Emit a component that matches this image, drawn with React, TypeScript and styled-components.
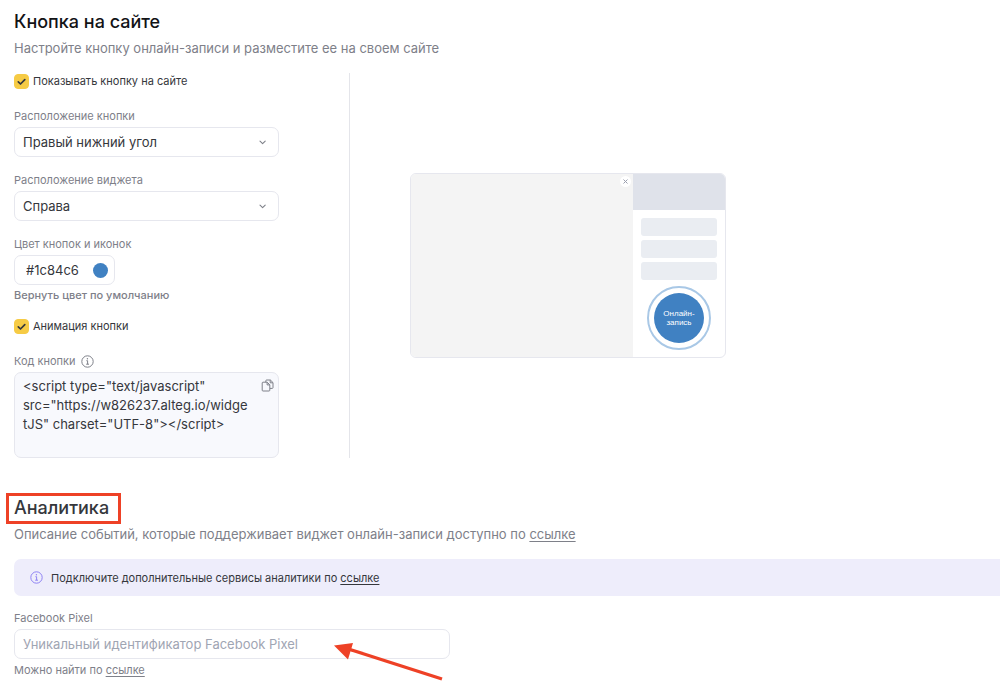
import React from 'react';
import styled, { createGlobalStyle } from 'styled-components';

const GlobalStyle = createGlobalStyle`
  *, *::before, *::after { box-sizing: border-box; }
  body {
    margin: 0;
    background: #fff;
    color: #35373c;
    font-family: Inter, "Liberation Sans", sans-serif;
    font-size: 11px;
    line-height: 16px;
  }
`;

const Page = styled.main`
  padding: 10px 0 16px 14px;
`;

const Title = styled.h2<{ $tone?: string }>`
  margin: 0;
  font-size: 18px;
  line-height: 24px;
  font-weight: 500;
  color: ${(p) => p.$tone ?? '#121316'};
`;

const Lead = styled.p`
  margin: 4px 0 15px;
  font-size: 13px;
  line-height: 20px;
  color: #7e8089;
`;

const Columns = styled.div`
  display: flex;
  margin-bottom: 38px;
`;

const Settings = styled.div`
  flex: 0 0 336px;
  padding-right: 70px;
  border-right: 1px solid #e4e5ea;
`;

const Field = styled.div`
  display: flex;
  flex-direction: column;
  align-items: flex-start;
  gap: 3px;
  margin-bottom: 15px;
  &:last-child { margin-bottom: 0; }
`;

const Label = styled.label`
  display: flex;
  align-items: center;
  gap: 5px;
  color: #7e8089;
`;

const CheckRow = styled.label`
  display: flex;
  align-items: center;
  gap: 4px;
  margin-bottom: 19px;
`;

const CheckWrap = styled.span`
  display: grid;
  width: 15px;
  height: 15px;
  > * { grid-area: 1 / 1; }
  svg { pointer-events: none; }
`;

const CheckBox = styled.input`
  appearance: none;
  width: 15px;
  height: 15px;
  margin: 0;
  border: 1px solid #c9ccd6;
  border-radius: 4px;
  &:checked { border-color: #f6cb45; background: #f6cb45; }
`;

const SelectWrap = styled.div`
  display: grid;
  align-items: center;
  width: 100%;
  > * { grid-area: 1 / 1; }
  svg { justify-self: end; margin-right: 12px; pointer-events: none; }
`;

const Select = styled.select`
  appearance: none;
  width: 100%;
  height: 30px;
  padding: 0 28px 0 8px;
  border: 1px solid #e6e7ee;
  border-radius: 7px;
  background: #fff;
  color: #35373c;
  font: inherit;
  font-size: 13px;
`;

const ColorBox = styled.div`
  display: flex;
  align-items: center;
  gap: 8px;
  width: 101px;
  height: 30px;
  padding: 0 6px 0 11px;
  border: 1px solid #e6e7ee;
  border-radius: 7px;
`;

const ColorInput = styled.input`
  flex: 1;
  min-width: 0;
  padding: 0;
  border: 0;
  outline: 0;
  background: none;
  color: #35373c;
  font: inherit;
  font-size: 13px;
`;

const Swatch = styled.span`
  width: 15px;
  height: 15px;
  border-radius: 50%;
  background: #4081c2;
`;

const ResetButton = styled.button`
  margin-top: -1px;
  padding: 0;
  border: 0;
  background: none;
  color: #7e8089;
  font: inherit;
  font-weight: 500;
  cursor: pointer;
`;

const CodeWrap = styled.div`
  display: grid;
  width: 100%;
  > * { grid-area: 1 / 1; }
`;

const Code = styled.textarea`
  width: 100%;
  height: 86px;
  padding: 4px 30px 4px 8px;
  border: 1px solid #e6e7ee;
  border-radius: 7px;
  background: #f8f9fd;
  color: #35373c;
  font: inherit;
  font-size: 13px;
  line-height: 19px;
  resize: none;
  overflow: hidden;
`;

const CopyButton = styled.button`
  display: flex;
  align-self: start;
  justify-self: end;
  margin: 7px 5px 0 0;
  padding: 0;
  border: 0;
  background: none;
  cursor: pointer;
`;

const PreviewPane = styled.div`
  display: flex;
  flex: 1;
  align-items: center;
  padding-left: 60px;
`;

const Preview = styled.div`
  display: flex;
  width: 316px;
  height: 185px;
  border: 1px solid #e6e7ee;
  border-radius: 6px;
  overflow: hidden;
`;

const PreviewSite = styled.div`
  display: flex;
  flex: 1;
  align-items: flex-start;
  justify-content: flex-end;
  padding: 2px;
  background: #f4f4f4;
`;

const PreviewClose = styled.span`
  display: flex;
  align-items: center;
  justify-content: center;
  width: 11px;
  height: 11px;
  border-radius: 50%;
  background: #fff;
`;

const PreviewWidget = styled.div`
  display: flex;
  flex-direction: column;
  align-items: center;
  gap: 4px;
  width: 92px;
`;

const PreviewHeader = styled.div`
  width: 100%;
  height: 36px;
  margin-bottom: 4px;
  background: #dfe2ea;
`;

const PreviewLine = styled.div`
  width: 76px;
  height: 18px;
  border-radius: 3px;
  background: #eaedf2;
`;

const PulseRing = styled.div`
  display: flex;
  align-items: center;
  justify-content: center;
  width: 64px;
  height: 64px;
  margin-top: 2px;
  border: 2px solid #a9c8e6;
  border-radius: 50%;
`;

const RecordButton = styled.button`
  width: 50px;
  height: 50px;
  padding: 0;
  border: 0;
  border-radius: 50%;
  background: #4081c2;
  color: #fff;
  font-family: "Liberation Sans", Arial, sans-serif;
  font-size: 8px;
  line-height: 9px;
`;

const Marked = styled.div`
  position: relative;
  width: fit-content;
  &::after {
    content: '';
    position: absolute;
    inset: -3px -12px -4px -8px;
    border: 3px solid #ee4126;
  }
`;

const Link = styled.a`
  color: inherit;
  text-decoration: underline;
  text-underline-offset: 2px;
`;

const Notice = styled.div`
  display: flex;
  align-items: center;
  gap: 8px;
  height: 37px;
  margin-bottom: 14px;
  padding-left: 16px;
  border-radius: 7px 0 0 7px;
  background: #eeedfb;
`;

const PixelWrap = styled.div`
  position: relative;
  width: 100%;
  max-width: 436px;
`;

const PixelInput = styled.input`
  width: 100%;
  height: 30px;
  padding: 0 8px;
  border: 1px solid #e6e7ee;
  border-radius: 7px;
  background: #fff;
  font: inherit;
  font-size: 13px;
  &::placeholder { color: #9fa5b3; opacity: 1; }
`;

const Arrow = styled.svg`
  position: absolute;
  top: 11px;
  right: 6px;
  pointer-events: none;
`;

const Hint = styled.span`
  color: #7e8089;
`;

const Check = () => (
  <svg width="15" height="15" viewBox="0 0 15 15" fill="none" stroke="#35373c" strokeWidth="1.7" strokeLinecap="round" strokeLinejoin="round">
    <path d="M4.3 7.9l2.2 2.1 4.3-4.3" />
  </svg>
);

const Chevron = () => (
  <svg width="9" height="9" viewBox="0 0 9 9" fill="none" stroke="#7e8089" strokeWidth="1.1" strokeLinecap="round" strokeLinejoin="round">
    <path d="M2 3.2l2.6 2.5 2.6-2.5" />
  </svg>
);

const Info = ({ color }: { color: string }) => (
  <svg width="13" height="13" viewBox="0 0 13 13" fill="none" stroke={color} strokeWidth="1">
    <circle cx="6.5" cy="6.5" r="5.7" />
    <path d="M5.4 5.7h1.2v3.4M5.2 9.2h2.8" />
    <circle cx="6.4" cy="3.8" r=".7" fill={color} stroke="none" />
  </svg>
);

const Copy = () => (
  <svg width="13" height="13" viewBox="0 0 13 13" fill="none" stroke="#7e8089" strokeWidth="1" strokeLinejoin="round">
    <path d="M5.6 1h3.8l2.600 2.600v5a.8.8 0 0 1-.8.8H9" />
    <path d="M5.6 1a.8.8 0 0 0-.8.8v1.400" />
    <path d="M9.2 1.100v2.700h2.700" />
    <path d="M2 3.200h4.200l2.600 2.600v5.400a.8.8 0 0 1-.8.800H2a.8.8 0 0 1-.8-.8V4a.8.8 0 0 1 .8-.8z" />
    <path d="M6.100 3.300v2.600h2.600" />
  </svg>
);

const CheckField = ({ text }: { text: string }) => (
  <CheckRow>
    <CheckWrap>
      <CheckBox type="checkbox" defaultChecked />
      <Check />
    </CheckWrap>
    {text}
  </CheckRow>
);

const SelectField = ({ id, label, options }: { id: string; label: string; options: string[] }) => (
  <Field>
    <Label htmlFor={id}>{label}</Label>
    <SelectWrap>
      <Select id={id}>
        {options.map((o) => <option key={o}>{o}</option>)}
      </Select>
      <Chevron />
    </SelectWrap>
  </Field>
);

const widgetCode =
  '<script type="text/javascript" src="https://w826237.alteg.io/widgetJS" charset="UTF-8"></' + 'script>';

export default function App() {
  return (
    <Page>
      <GlobalStyle />
      <Title>Кнопка на сайте</Title>
      <Lead>Настройте кнопку онлайн-записи и разместите ее на своем сайте</Lead>
      <Columns>
        <Settings>
          <CheckField text="Показывать кнопку на сайте" />
          <SelectField id="button-place" label="Расположение кнопки" options={['Правый нижний угол']} />
          <SelectField id="widget-place" label="Расположение виджета" options={['Справа']} />
          <Field>
            <Label htmlFor="color">Цвет кнопок и иконок</Label>
            <ColorBox>
              <ColorInput id="color" defaultValue="#1c84c6" />
              <Swatch />
            </ColorBox>
            <ResetButton type="button">Вернуть цвет по умолчанию</ResetButton>
          </Field>
          <CheckField text="Анимация кнопки" />
          <Field>
            <Label htmlFor="code">Код кнопки <Info color="#7e8089" /></Label>
            <CodeWrap>
              <Code id="code" readOnly value={widgetCode} />
              <CopyButton type="button" aria-label="Скопировать"><Copy /></CopyButton>
            </CodeWrap>
          </Field>
        </Settings>
        <PreviewPane>
          <Preview>
            <PreviewSite>
              <PreviewClose>
                <svg width="5" height="5" viewBox="0 0 5 5" stroke="#9a9fae" strokeWidth="1">
                  <path d="M.5.5l4 4M4.500.5l-4 4" />
                </svg>
              </PreviewClose>
            </PreviewSite>
            <PreviewWidget>
              <PreviewHeader />
              <PreviewLine />
              <PreviewLine />
              <PreviewLine />
              <PulseRing>
                <RecordButton type="button">Онлайн-<br />запись</RecordButton>
              </PulseRing>
            </PreviewWidget>
          </Preview>
        </PreviewPane>
      </Columns>

      <Marked>
        <Title $tone="#35373c">Аналитика</Title>
      </Marked>
      <Lead>
        Описание событий, которые поддерживает виджет онлайн-записи доступно по <Link href="#events">ссылке</Link>
      </Lead>
      <Notice>
        <Info color="#8f83f3" />
        <span>Подключите дополнительные сервисы аналитики по <Link href="#services">ссылке</Link></span>
      </Notice>
      <Field>
        <Label htmlFor="pixel">Facebook Pixel</Label>
        <PixelWrap>
          <PixelInput id="pixel" placeholder="Уникальный идентификатор Facebook Pixel" />
          <Arrow width="110" height="42" viewBox="0 0 110 42">
            <path d="M16 9.500L108 39" stroke="#ee4126" strokeWidth="3.400" />
            <path d="M0 5.500L19 3L14 19.500z" fill="#ee4126" />
          </Arrow>
        </PixelWrap>
        <Hint>Можно найти по <Link href="#pixel-help">ссылке</Link></Hint>
      </Field>
    </Page>
  );
}
